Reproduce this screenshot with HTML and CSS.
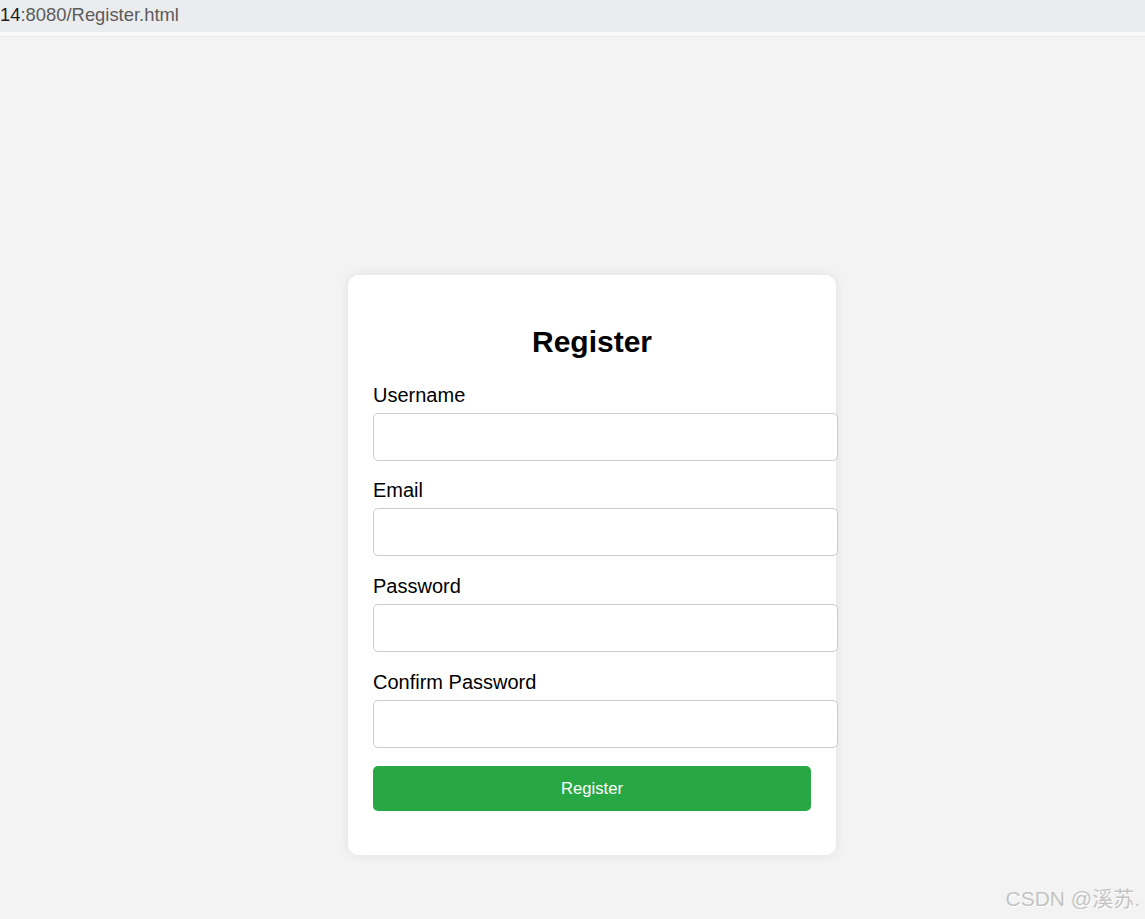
FILE: index.html
```html
<!DOCTYPE html>
<html lang="en">
<head>
<meta charset="utf-8">
<title>Register</title>
<link rel="stylesheet" href="styles.css">
</head>
<body>
<header class="urlbar">
  <div class="url"><span class="host">14</span>:8080/Register.html</div>
</header>
<div class="urlbar-strip"></div>
<main class="page">
  <div class="card">
    <h2 class="title">Register</h2>
    <form class="form">
      <label class="label" for="username">Username</label>
      <input class="input" id="username" type="text">
      <label class="label" for="email">Email</label>
      <input class="input" id="email" type="email">
      <label class="label" for="password">Password</label>
      <input class="input" id="password" type="password">
      <label class="label" for="confirm">Confirm Password</label>
      <input class="input" id="confirm" type="password">
      <button class="btn" type="button">Register</button>
    </form>
  </div>
</main>
<div class="watermark">CSDN @溪苏.</div>
</body>
</html>
```

FILE: styles.css
```css
html, body {
  margin: 0;
  padding: 0;
}
body {
  background: #f3f3f3;
  font-family: "Liberation Sans", Arial, "Noto Sans CJK SC", sans-serif;
  height: 919px;
  overflow: hidden;
  position: relative;
}
.urlbar {
  height: 32px;
  background: #ebecee;
  display: flex;
  align-items: center;
}
.url {
  font-size: 18.4px;
  color: #5b5b5b;
  line-height: 1;
  margin-top: -2px;
}
.host {
  color: #1e1e1e;
}
.urlbar-strip {
  height: 4px;
  background: #f8f9fb;
  border-bottom: 1px solid #e9e9e9;
}
.page {
  padding-top: 238px;
  padding-left: 348px;
}
.card {
  width: 438px;
  padding: 25px;
  background: #ffffff;
  border-radius: 10px;
  box-shadow: 0 0 12px rgba(0, 0, 0, 0.08);
}
.title {
  margin: 23.5px 0 25px;
  font-size: 30px;
  line-height: 35px;
  font-weight: bold;
  text-align: center;
  color: #000;
}
.form {
  display: flex;
  flex-direction: column;
  align-items: flex-start;
}
.label {
  font-size: 20px;
  line-height: 23px;
  color: #000;
  margin-bottom: 6px;
}
.input {
  box-sizing: content-box;
  width: 438px;
  height: 22px;
  padding: 12px 12.5px 12px 12.5px;
  margin: 0 0 18.7px;
  border: 1px solid #cccccc;
  border-radius: 5px;
  background: #fff;
  font-size: 17px;
  font-family: inherit;
}
.btn {
  width: 438px;
  height: 45px;
  margin: 0 0 19px;
  border: none;
  border-radius: 5px;
  background: #28a745;
  color: #fff;
  font-family: inherit;
  font-size: 16.67px;
  cursor: pointer;
}
.watermark {
  position: absolute;
  right: 5px;
  bottom: 8px;
  font-family: "Liberation Sans", "Noto Sans CJK SC", sans-serif;
  font-size: 21px;
  line-height: 24px;
  color: #c4c4c4;
  text-shadow: 1px 1px 0 #ffffff;
}
```
